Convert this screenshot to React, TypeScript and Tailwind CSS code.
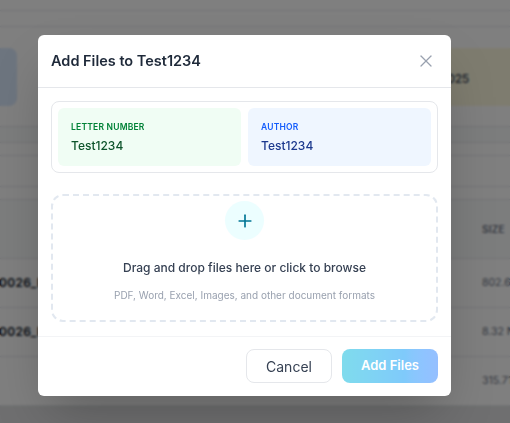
import React from "react";
import { Plus, X } from "lucide-react";

const rows = [
  { name: "0026_Report_Final.pdf", size: "802.6 KB" },
  { name: "0026_Receipt_Scan.pdf", size: "8.32 MB" },
  { name: "", size: "315.71 KB" },
];

const App: React.FC = () => {
  return (
    <div className="relative h-[423px] w-full overflow-hidden bg-white font-['Inter',sans-serif]">
      {/* page behind the dialog */}
      <div className="h-[11px] border-b border-gray-200" />
      <div className="h-[16px] border-b border-gray-200" />
      <div className="-mx-[60px] flex h-[79px] justify-between pt-[21px]">
        <div className="h-[58px] w-[77px] rounded-lg bg-blue-100" />
        <div className="flex h-[58px] w-[270px] items-center justify-end rounded-lg bg-[#fdf9df] pr-[101px] pt-[4px] text-[12px] font-medium tracking-tight text-gray-700">
          12/05/2025
        </div>
      </div>
      <div className="h-[20px]" />
      <div className="h-[17px] border-y border-gray-200 bg-gray-50" />
      <div className="h-[13px] border-b border-gray-200" />
      <div className="h-[31px] border-b border-gray-200" />
      <div className="h-[13px] border-b border-gray-200" />
      <div className="flex h-[59px] items-center border-b border-gray-200 bg-gray-50">
        <div className="flex-1" />
        <div className="w-[28px] shrink-0 whitespace-nowrap text-[10px] font-semibold tracking-wide text-gray-500">
          SIZE
        </div>
      </div>
      {rows.map((row, i) => (
        <div key={i} className="flex h-[49px] items-center border-b border-gray-200">
          <div className="-ml-[1px] flex-1 whitespace-nowrap text-[12px] font-semibold tracking-wide text-gray-900">
            {row.name}
          </div>
          <div className="w-[28px] shrink-0 whitespace-nowrap text-[10.5px] text-gray-500">
            {row.size}
          </div>
        </div>
      ))}
      <div className="h-[20px] bg-[#dedfe0]" />

      {/* overlay */}
      <div className="absolute inset-0 bg-black/50 backdrop-blur-[1px]" />

      {/* dialog */}
      <div className="absolute left-[38px] top-[35px] w-[413px] rounded-md bg-white shadow-2xl">
        <div className="flex h-[53px] items-center justify-between border-b border-gray-200 pl-[13px] pr-[15px]">
          <h2 className="text-[14.5px] font-semibold text-gray-800">Add Files to Test1234</h2>
          <button className="text-gray-400">
            <X size={20} strokeWidth={1.5} />
          </button>
        </div>

        <div className="px-[13px] pt-[13px] pb-[14px]">
          <div className="grid grid-cols-2 gap-[7px] rounded-lg border border-gray-200 p-[6px]">
            <div className="h-[58px] rounded-md bg-green-50 pl-[13px] pt-[13px]">
              <div className="text-[8.5px] font-semibold uppercase leading-[12px] tracking-wide text-green-700">
                Letter Number
              </div>
              <div className="mt-[5px] text-[12px] font-medium leading-[16px] text-green-900">
                Test1234
              </div>
            </div>
            <div className="h-[58px] rounded-md bg-blue-50 pl-[13px] pt-[13px]">
              <div className="text-[8.5px] font-semibold uppercase leading-[12px] tracking-wide text-blue-600">
                Author
              </div>
              <div className="mt-[5px] text-[12px] font-medium leading-[16px] text-blue-900">
                Test1234
              </div>
            </div>
          </div>

          <div className="mt-[21px] flex h-[128px] flex-col items-center rounded-xl border-2 border-dashed border-slate-200 pt-[5px]">
            <div className="flex h-[39px] w-[39px] items-center justify-center rounded-full bg-cyan-50 text-cyan-700">
              <Plus size={20} strokeWidth={2} />
            </div>
            <p className="mt-[20px] text-[12px] font-medium leading-[16px] text-gray-700">
              Drag and drop files here or click to browse
            </p>
            <p className="mt-[12px] text-[10px] leading-[14px] text-gray-400">
              PDF, Word, Excel, Images, and other document formats
            </p>
          </div>
        </div>

        <div className="flex justify-end gap-[10px] border-t border-gray-100 px-[13px] pt-[12px] pb-[13px]">
          <button className="h-[34px] w-[86px] rounded-lg border border-gray-200 bg-white text-[14px] text-gray-700">
            Cancel
          </button>
          <button className="h-[34px] w-[96px] rounded-lg bg-gradient-to-r from-cyan-500 to-blue-500 text-[13px] font-semibold text-white opacity-50">
            Add Files
          </button>
        </div>
      </div>
    </div>
  );
};

export default App;
